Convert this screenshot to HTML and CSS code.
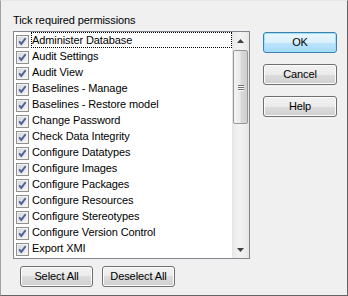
FILE: index.html
```html
<!DOCTYPE html>
<html>
<head>
<meta charset="utf-8">
<link rel="stylesheet" href="styles.css">
</head>
<body>
<div class="dialog">
  <div class="main">
    <div class="caption">Tick required permissions</div>
    <div class="listbox">
      <div class="items">
        <div class="row"><span class="cb"></span><span class="label focus">Administer Database</span></div>
        <div class="row"><span class="cb"></span><span class="label">Audit Settings</span></div>
        <div class="row"><span class="cb"></span><span class="label">Audit View</span></div>
        <div class="row"><span class="cb"></span><span class="label">Baselines - Manage</span></div>
        <div class="row"><span class="cb"></span><span class="label">Baselines - Restore model</span></div>
        <div class="row"><span class="cb"></span><span class="label">Change Password</span></div>
        <div class="row"><span class="cb"></span><span class="label">Check Data Integrity</span></div>
        <div class="row"><span class="cb"></span><span class="label">Configure Datatypes</span></div>
        <div class="row"><span class="cb"></span><span class="label">Configure Images</span></div>
        <div class="row"><span class="cb"></span><span class="label">Configure Packages</span></div>
        <div class="row"><span class="cb"></span><span class="label">Configure Resources</span></div>
        <div class="row"><span class="cb"></span><span class="label">Configure Stereotypes</span></div>
        <div class="row"><span class="cb"></span><span class="label">Configure Version Control</span></div>
        <div class="row"><span class="cb"></span><span class="label">Export XMI</span></div>
      </div>
      <div class="scrollbar">
        <div class="arrow up"><svg width="7" height="4" viewBox="0 0 7 4"><path d="M3.5 0 L7 4 L0 4 Z" fill="#404040"/></svg></div>
        <div class="track">
          <div class="thumb"><span class="grip"></span><span class="grip"></span><span class="grip"></span></div>
        </div>
        <div class="arrow down"><svg width="7" height="4" viewBox="0 0 7 4"><path d="M0 0 L7 0 L3.5 4 Z" fill="#404040"/></svg></div>
      </div>
    </div>
    <div class="bottom">
      <button class="btn">Select All</button>
      <button class="btn">Deselect All</button>
    </div>
  </div>
  <div class="side">
    <button class="btn default">OK</button>
    <button class="btn">Cancel</button>
    <button class="btn">Help</button>
  </div>
</div>
</body>
</html>
```
FILE: styles.css
```css
html, body {
  margin: 0;
  padding: 0;
  background: #f0f0f0;
}
.dialog {
  width: 348px;
  height: 296px;
  box-sizing: border-box;
  border-top: 1px solid #e8e8e8;
  border-left: 1px solid #a0a0a0;
  border-right: 1px solid #646464;
  border-bottom: 1px solid #646464;
  background: #f0f0f0;
  display: flex;
  font-family: "Liberation Sans", Arial, sans-serif;
  font-size: 11px;
  letter-spacing: -0.1px;
  color: #000;
}
.main {
  margin-left: 12px;
  width: 237px;
  padding-top: 12px;
}
.caption {
  line-height: 14px;
  height: 14px;
  margin-bottom: 4px;
}
.listbox {
  height: 228px;
  box-sizing: border-box;
  border: 1px solid #828790;
  background: #fff;
  display: flex;
}
.items {
  flex: 1;
  overflow: hidden;
}
.row {
  height: 16px;
  display: flex;
  align-items: flex-start;
}
.cb {
  width: 13px;
  height: 13px;
  box-sizing: border-box;
  margin: 3px 2px 0 2px;
  border: 1px solid #8e8f8f;
  background-color: #f4f4f4;
  background-image:
    url("data:image/svg+xml;utf8,<svg xmlns='http://www.w3.org/2000/svg' width='11' height='11' viewBox='0 0 11 11'><path d='M2.2 5.4 L4.3 7.9 L8.6 2.2' fill='none' stroke='%234a5f9c' stroke-width='1.9'/></svg>"),
    linear-gradient(135deg, #d2d3d5 0%, #e6e7e8 55%, #f8f8f8 100%);
  box-shadow: inset 0 0 0 1px #f4f4f4;
}
.label {
  flex: 1;
  height: 16px;
  box-sizing: border-box;
  border: 1px solid transparent;
  padding-top: 1px;
  line-height: 13px;
  white-space: nowrap;
}
.label.focus {
  border: 1px dotted #000;
}
.scrollbar {
  width: 17px;
  display: flex;
  flex-direction: column;
  background: linear-gradient(90deg, #e3e3e3 0px, #ececec 2px, #f2f2f2 8px, #ececec 14px, #e3e3e3 17px);
}
.arrow {
  height: 17px;
  display: flex;
  align-items: center;
  justify-content: center;
}
.track {
  flex: 1;
  padding-top: 1px;
}
.thumb {
  margin: 0 1px 0 1px;
  height: 74px;
  box-sizing: border-box;
  border: 1px solid #979797;
  border-radius: 2px;
  background: linear-gradient(90deg, #f4f4f4 0%, #eaeaea 45%, #d9d9d9 55%, #cfcfcf 100%);
  display: flex;
  flex-direction: column;
  align-items: center;
  justify-content: center;
  gap: 1px;
}
.grip {
  width: 6px;
  height: 1px;
  background: #707070;
  box-shadow: 0 1px 0 #fafafa;
}
.bottom {
  margin-top: 7px;
  margin-left: 7px;
  display: flex;
  gap: 9px;
}
.btn {
  width: 73px;
  height: 21px;
  box-sizing: border-box;
  border: 1px solid #707070;
  border-radius: 3px;
  background: linear-gradient(180deg, #f2f2f2 0%, #ebebeb 50%, #dddddd 50%, #cfcfcf 100%);
  box-shadow: inset 0 0 0 1px #fbfbfb;
  font-family: "Liberation Sans", Arial, sans-serif;
  font-size: 11px;
  letter-spacing: -0.1px;
  color: #000;
  padding: 0;
  line-height: 17px;
  text-align: center;
}
.side {
  margin-left: 13px;
  padding-top: 31px;
  display: flex;
  flex-direction: column;
  gap: 11px;
}
.side .btn {
  width: 74px;
}
.btn.default {
  border-color: #3c7fb1;
  background: linear-gradient(180deg, #eaf6fd 0%, #d9f0fc 50%, #bee6fd 50%, #a7d9f5 100%);
  box-shadow: inset 0 0 0 1px #9ee2f9;
}
```
